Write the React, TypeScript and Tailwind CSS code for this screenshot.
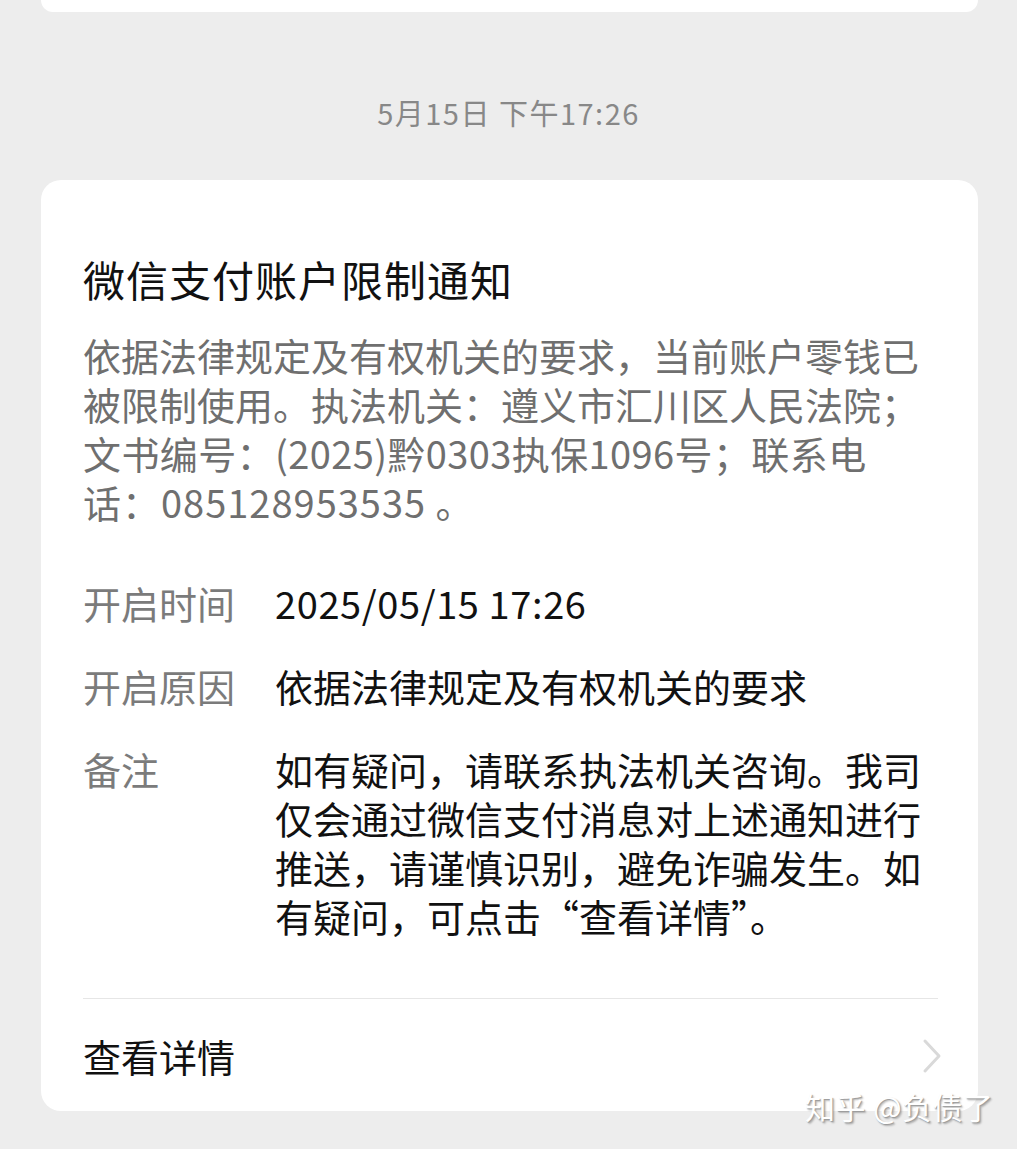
import React from "react";

const font = { fontFamily: '"Noto Sans CJK SC", "Noto Sans", sans-serif' };

function Row({ label, children }: { label: string; children: React.ReactNode }) {
  return (
    <div className="flex">
      <div className="w-[192px] shrink-0 text-[#7b7b7b]">{label}</div>
      <div className="flex-1 text-[#111]">{children}</div>
    </div>
  );
}

export default function App() {
  return (
    <div className="relative w-[1017px] h-[1149px] overflow-hidden bg-[#ededed]" style={font}>
      <div className="ml-[41px] mr-[39px] h-[12px] bg-white rounded-b-[20px]" />
      <div className="h-[80px]" />
      <div className="text-center text-[29px] leading-[40px] text-[#888888] tracking-[1.5px]">5月15日 下午17:26</div>
      <div className="h-[48px]" />
      <div className="ml-[41px] mr-[39px] bg-white rounded-[20px] pl-[42px] pr-[40px] pt-[71px] pb-[31px]">
        <div className="text-[42px] leading-[56px] text-[#111] tracking-[1px]">微信支付账户限制通知</div>
        <div className="mt-[23px] text-[38px] leading-[49px] text-[#6f6f6f]">
          <div>依据法律规定及有权机关的要求，当前账户零钱已</div>
          <div>被限制使用。执法机关：遵义市汇川区人民法院；</div>
          <div className="tracking-[0.4px]">文书编号：(2025)黔0303执保1096号；联系电</div>
          <div className="tracking-[1px]">话：085128953535 。</div>
        </div>
        <div className="mt-[52px] flex flex-col gap-[34px] text-[38px] leading-[49px]">
          <Row label="开启时间"><span className="tracking-[0.6px]">2025/05/15 17:26</span></Row>
          <Row label="开启原因">依据法律规定及有权机关的要求</Row>
          <Row label="备注">
            <div>如有疑问，请联系执法机关咨询。我司</div>
            <div>仅会通过微信支付消息对上述通知进行</div>
            <div>推送，请谨慎识别，避免诈骗发生。如</div>
            <div>有疑问，可点击“查看详情”。</div>
          </Row>
        </div>
        <div className="mt-[58px] h-px bg-[#e6e6e6]" />
        <div className="mt-[32px] flex items-center justify-between text-[38px] leading-[49px] text-[#111]">
          <span>查看详情</span>
          <svg width="20" height="36" viewBox="0 0 20 36" className="mr-[-4px]">
            <path d="M3 3 L17 18 L3 33" fill="none" stroke="#d9d9d9" strokeWidth="3" strokeLinecap="round" strokeLinejoin="round" />
          </svg>
        </div>
      </div>
      <div
        className="absolute left-[805px] top-[1086px] text-[30px] leading-[40px] text-white tracking-[0.5px]"
        style={{ textShadow: "1px 1px 1px #9a9a9a, 2px 2px 2px rgba(0,0,0,0.25)" }}
      >
        知乎 @负债了
      </div>
    </div>
  );
}
